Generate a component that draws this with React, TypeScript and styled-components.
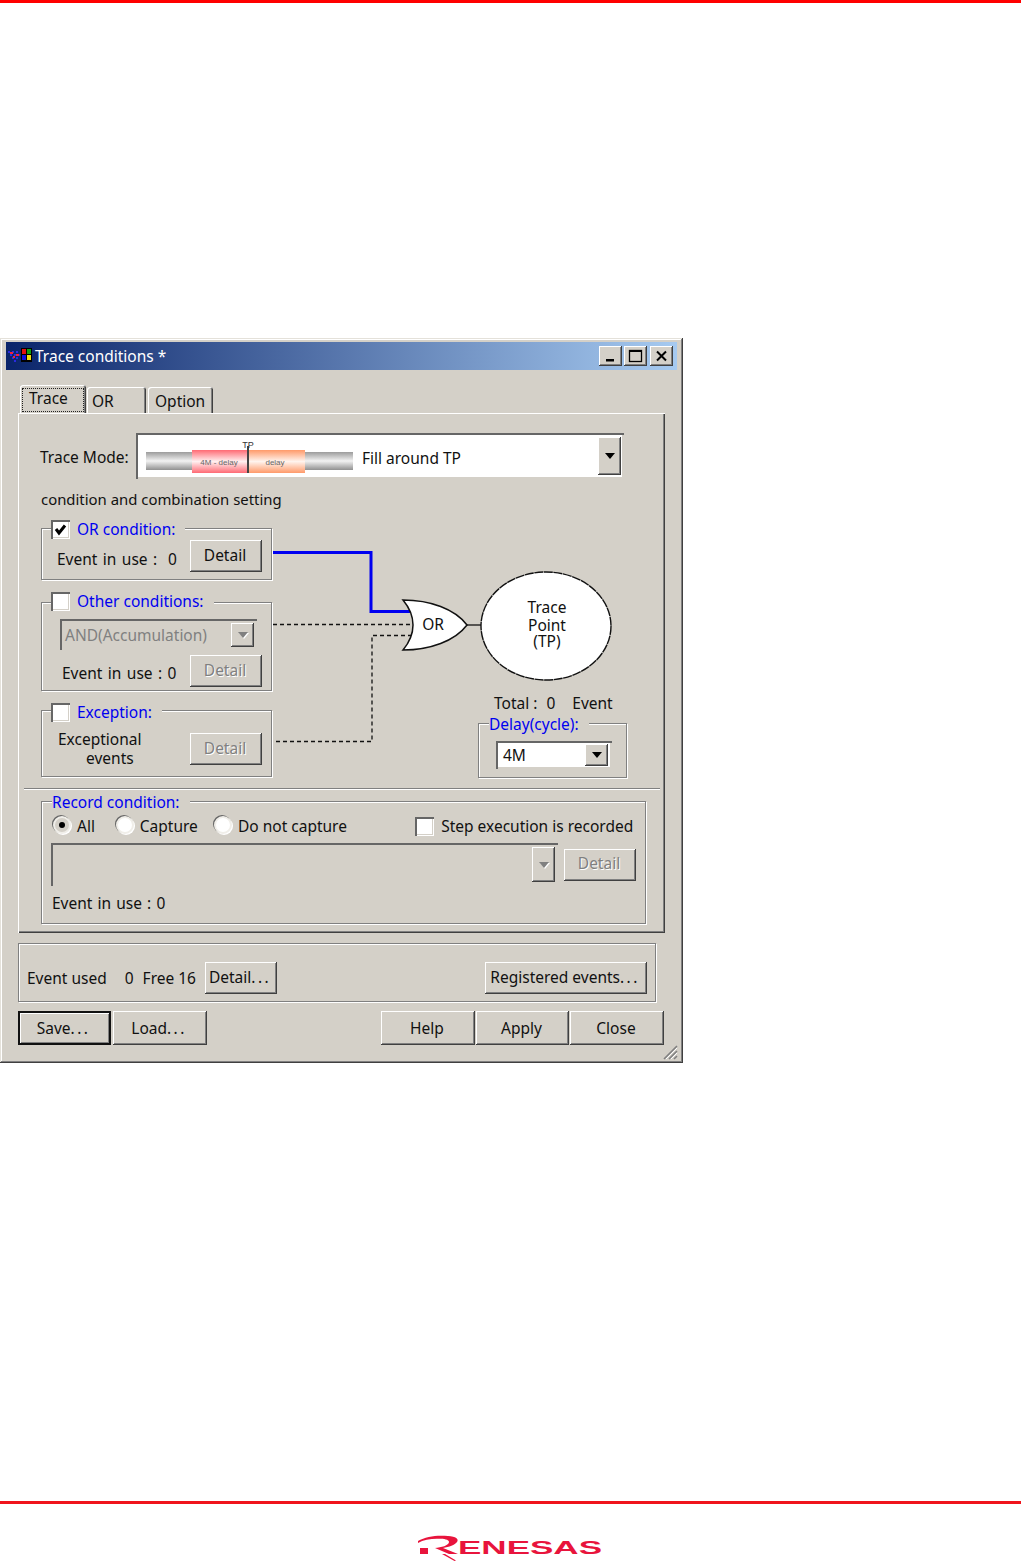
import React from 'react';
import styled, { createGlobalStyle } from 'styled-components';

const FACE = '#d4d0c8';

const GlobalStyle = createGlobalStyle`
  html, body {
    margin: 0;
    padding: 0;
    background: #fff;
  }
  body {
    font-family: 'Noto Sans', 'Open Sans', sans-serif;
    font-size: 15.5px;
    line-height: 20px;
    color: #111;
  }
  * {
    box-sizing: border-box;
  }
`;

const Page = styled.div`
  width: 1021px;
  height: 1562px;
  display: flex;
  flex-direction: column;
  overflow: hidden;
`;

const TopRule = styled.div`
  height: 3px;
  background: #f00;
`;

const Window = styled.div`
  position: relative;
  margin-top: 335px;
  width: 683px;
  height: 725px;
  padding: 4px 6px;
  background: ${FACE};
  box-shadow: inset -1px -1px 0 #404040, inset 1px 1px 0 #e4e1da,
    inset -2px -2px 0 #808080, inset 2px 2px 0 #fff;
`;

const TitleBar = styled.div`
  height: 28px;
  display: flex;
  align-items: center;
  padding: 0 4px 0 2px;
  background: linear-gradient(90deg, #0a246a, #a6caf0);
  color: #fff;
  font-size: 15.5px;
`;

const TitleText = styled.span`
  margin-left: 1px;
  flex: 1;
`;

const CaptionButton = styled.div<{ $ml?: number }>`
  width: 23px;
  height: 20px;
  margin-left: ${({ $ml }) => $ml ?? 2}px;
  background: ${FACE};
  box-shadow: inset -1px -1px 0 #404040, inset 1px 1px 0 #fff, inset -2px -2px 0 #808080;
  display: flex;
  align-items: center;
  justify-content: center;
`;

const Body = styled.div`
  padding: 15px 12px 0;
`;

const TabRow = styled.div`
  display: flex;
  align-items: flex-end;
  height: 28px;
  padding-left: 2px;
`;

const Tab = styled.div<{ $w: number; $pl?: number; $active?: boolean }>`
  width: ${({ $w }) => $w}px;
  height: ${({ $active }) => ($active ? 28 : 26)}px;
  margin-right: ${({ $active }) => ($active ? 1 : 2)}px;
  padding: ${({ $active, $pl }) => ($active ? '3px 2px 1px' : `4px 0 0 ${$pl ?? 5}px`)};
  background: ${FACE};
  border-radius: 3px 3px 0 0;
  box-shadow: inset 1px 1px 0 #fff, inset -1px 0 0 #404040, inset -2px 0 0 #808080;
`;

const FocusBox = styled.div`
  height: 100%;
  padding-left: 7px;
  outline: 1px dotted #222;
  outline-offset: -1px;
`;

const TabPanel = styled.div`
  height: 520px;
  background: ${FACE};
  box-shadow: inset 1px 1px 0 #fff, inset -1px -1px 0 #404040, inset -2px -2px 0 #808080;
`;

const TopSection = styled.div`
  padding: 20px 0 0 22px;
`;

const ModeRow = styled.div`
  display: flex;
  align-items: center;
`;

const ModeLabel = styled.span`
  width: 96px;
  margin-top: 2px;
`;

const Sunken = styled.div<{ $disabled?: boolean }>`
  display: flex;
  align-items: center;
  background: ${({ $disabled }) => ($disabled ? FACE : '#fff')};
  box-shadow: inset 2px 2px 0 #666, inset -2px -2px 0 ${FACE}, inset -1px -1px 0 #fff;
`;

const ModeCombo = styled(Sunken)`
  width: 488px;
  height: 46px;
  padding: 0 3px 0 10px;
`;

const ModeSvg = styled.svg`
  margin-top: 1px;
`;

const ModeText = styled.span`
  margin: 4px 0 0 9px;
  flex: 1;
`;

const DropButton = styled.div<{ $h: number; $w?: number; $disabled?: boolean }>`
  width: ${({ $w }) => $w ?? 23}px;
  height: ${({ $h }) => $h}px;
  flex: none;
  display: flex;
  align-items: center;
  justify-content: center;
  background: ${FACE};
  box-shadow: inset -1px -1px 0 #404040, inset 1px 1px 0 #fff, inset -2px -2px 0 #808080;
  &::after {
    content: '';
    border-style: solid;
    border-width: 6px 5.5px 0;
    border-color: ${({ $disabled }) => ($disabled ? '#808080' : '#000')} transparent transparent;
    filter: ${({ $disabled }) => ($disabled ? 'drop-shadow(1px 1px 0 #fff)' : 'none')};
  }
`;

const Caption = styled.div`
  margin-top: 10px;
  margin-left: 1px;
  font-size: 14.9px;
`;

const Conditions = styled.div`
  position: relative;
  display: grid;
  grid-template-columns: 231px 1fr;
  margin: 19px 0 0 1px;
  height: 250px;
`;

const GroupColumn = styled.div`
  display: flex;
  flex-direction: column;
`;

const Group = styled.div<{ $h: number; $w?: number; $gap?: number }>`
  position: relative;
  width: ${({ $w }) => ($w ? `${$w}px` : 'auto')};
  height: ${({ $h }) => $h}px;
  margin-bottom: ${({ $gap }) => $gap ?? 0}px;
  border: 1px solid #808080;
  box-shadow: 1px 1px 0 #fff, inset 1px 1px 0 #fff;
`;

const Legend = styled.div<{ $left: number; $top?: number }>`
  position: absolute;
  top: ${({ $top }) => $top ?? -10}px;
  left: ${({ $left }) => $left}px;
  display: flex;
  align-items: center;
  height: 20px;
  padding: 0 10px 0 0;
  background: ${FACE};
  color: #0000f0;
  white-space: nowrap;
`;

const Check = styled.div`
  width: 19px;
  height: 19px;
  margin-right: 7px;
  flex: none;
  background: #fff;
  box-shadow: inset 2px 2px 0 #666, inset -1px -1px 0 #fff, inset -2px -2px 0 ${FACE};
  display: flex;
  align-items: center;
  justify-content: center;
`;

const Button = styled.div<{ $w: number; $h?: number; $disabled?: boolean; $default?: boolean }>`
  width: ${({ $w }) => $w}px;
  height: ${({ $h }) => $h ?? 32}px;
  flex: none;
  display: flex;
  align-items: center;
  justify-content: center;
  padding: 0 2px ${({ $h }) => ($h ? 1 : 3)}px 0;
  background: ${FACE};
  color: ${({ $disabled }) => ($disabled ? '#808080' : '#111')};
  text-shadow: ${({ $disabled }) => ($disabled ? '1px 1px 0 #fff' : 'none')};
  box-shadow: ${({ $default }) =>
    $default
      ? 'inset 0 0 0 2px #111, inset 3px 3px 0 #fff, inset -3px -3px 0 #808080'
      : 'inset -1px -1px 0 #404040, inset 1px 1px 0 #fff, inset -2px -2px 0 #808080'};
`;

const Dots = styled.span`
  letter-spacing: 2.4px;
`;

const GroupRow = styled.div<{ $pad: string }>`
  display: flex;
  align-items: center;
  justify-content: space-between;
  padding: ${({ $pad }) => $pad};
`;

const UseText = styled.span<{ $mt?: number }>`
  margin-top: ${({ $mt }) => $mt ?? 5}px;
  word-spacing: 1.4px;
`;

const OtherSelect = styled(Sunken)`
  width: 197px;
  height: 31px;
  margin: 16px 0 0 18px;
  padding: 0 3px 0 5px;
  color: #808080;
  justify-content: space-between;
`;

const ExceptionText = styled.div`
  width: 84px;
  line-height: 19px;
`;

const IndentedLine = styled.div`
  padding-left: 28px;
`;

const SideColumn = styled.div`
  display: flex;
  flex-direction: column;
  justify-content: flex-end;
  padding: 0 0 0 206px;
`;

const TotalRow = styled.div`
  display: flex;
  padding-left: 16px;
  margin-bottom: 10px;
`;

const TotalPart = styled.span<{ $ml?: number }>`
  margin-left: ${({ $ml }) => $ml ?? 0}px;
`;

const DelaySelect = styled(Sunken)`
  width: 116px;
  height: 28px;
  margin: 17px 0 0 17px;
  padding: 0 4px 0 7px;
  justify-content: space-between;
`;

const Wires = styled.svg`
  position: absolute;
  left: 0;
  top: 0;
  pointer-events: none;
  overflow: visible;
  font-family: 'Noto Sans', 'Open Sans', sans-serif;
  font-size: 15.5px;
  fill: #111;
`;

const Separator = styled.div`
  height: 2px;
  margin: 10px 5px 0 6px;
  background: #808080;
  border-bottom: 1px solid #fff;
`;

const RecordSection = styled.div`
  padding: 11px 0 0 23px;
`;

const RecordGroup = styled.div`
  position: relative;
  width: 605px;
  height: 123px;
  padding: 13px 9px 0 9px;
  border: 1px solid #808080;
  box-shadow: 1px 1px 0 #fff, inset 1px 1px 0 #fff;
`;

const RadioRow = styled.div`
  display: flex;
  align-items: center;
  height: 22px;
  margin-left: 1px;
`;

const RadioItem = styled.div<{ $w: number }>`
  width: ${({ $w }) => $w}px;
  display: flex;
  align-items: center;
`;

const Radio = styled.div<{ $checked?: boolean }>`
  width: 18px;
  height: 18px;
  margin: -3px 6px 0 1px;
  flex: none;
  border-radius: 50%;
  background: ${({ $checked }) => ($checked ? FACE : '#fff')};
  border: 2px solid #f0eee9;
  box-shadow: -1px -1px 0 #666, 1px 1px 0 #fff;
  display: flex;
  align-items: center;
  justify-content: center;
  &::after {
    content: '';
    display: ${({ $checked }) => ($checked ? 'block' : 'none')};
    width: 6px;
    height: 6px;
    border-radius: 50%;
    background: #000;
  }
`;

const RecordCombo = styled(Sunken)`
  width: 507px;
  height: 43px;
  padding-right: 3px;
  justify-content: flex-end;
`;

const RecordComboRow = styled.div`
  display: flex;
  align-items: center;
  gap: 6px;
  margin-top: 6px;
`;

const EventNote = styled.div`
  margin: 7px 0 0 1px;
  word-spacing: 1.1px;
`;

const EventGroup = styled.div`
  display: flex;
  align-items: center;
  justify-content: space-between;
  width: 638px;
  height: 59px;
  margin-top: 10px;
  padding: 11px 8px 0 8px;
  border: 1px solid #808080;
  box-shadow: 1px 1px 0 #fff, inset 1px 1px 0 #fff;
`;

const EventStats = styled.div`
  display: flex;
  align-items: center;
`;

const StatText = styled.span<{ $ml?: number; $mr?: number }>`
  margin-left: ${({ $ml }) => $ml ?? 0}px;
  margin-right: ${({ $mr }) => $mr ?? 0}px;
`;

const ActionRow = styled.div`
  display: flex;
  justify-content: space-between;
  width: 646px;
  margin-top: 9px;
`;

const ActionGroup = styled.div<{ $gap: number }>`
  display: flex;
  gap: ${({ $gap }) => $gap}px;
`;

const Grip = styled.svg`
  position: absolute;
  right: 5px;
  bottom: 3px;
`;

const Spacer = styled.div`
  flex: 1;
`;

const BottomRule = styled.div`
  height: 3px;
  background: #f0141c;
`;

const LogoRow = styled.div`
  height: 58px;
  padding-top: 31px;
  display: flex;
  justify-content: center;
`;

const AppIcon = () => (
  <svg width="26" height="18" viewBox="0 0 26 18">
    <g fill="#2a2ae0">
      <rect x="0" y="4" width="2" height="2" />
      <rect x="4" y="4" width="2" height="2" />
      <rect x="8" y="4" width="2" height="2" />
      <rect x="2" y="7" width="2" height="2" />
      <rect x="6" y="7" width="2" height="2" />
      <rect x="10" y="7" width="2" height="2" />
      <rect x="4" y="10" width="2" height="2" />
      <rect x="8" y="10" width="2" height="2" />
      <rect x="6" y="13" width="2" height="2" />
    </g>
    <g fill="#f0203c">
      <rect x="2" y="5" width="3" height="2" />
      <rect x="8" y="7" width="3" height="2" />
      <rect x="5" y="9" width="2" height="2" />
    </g>
    <rect x="13" y="1" width="11" height="14" fill="#000" />
    <rect x="14" y="2" width="4" height="5" fill="#e01010" />
    <rect x="19" y="2" width="4" height="5" fill="#10a010" />
    <rect x="14" y="8" width="4" height="5" fill="#1010e0" />
    <rect x="19" y="8" width="4" height="5" fill="#f0e010" />
  </svg>
);

const MinIcon = () => (
  <svg width="13" height="12" viewBox="0 0 13 12">
    <rect x="2" y="9" width="8" height="2.5" fill="#000" />
  </svg>
);

const MaxIcon = () => (
  <svg width="15" height="14" viewBox="0 0 15 14">
    <rect x="1.5" y="1.5" width="12" height="11" fill="none" stroke="#000" strokeWidth="1.3" />
    <rect x="1" y="1" width="13" height="2" fill="#000" />
  </svg>
);

const CloseIcon = () => (
  <svg width="13" height="12" viewBox="0 0 13 12">
    <path d="M2 1.5 L11 10.5 M11 1.5 L2 10.5" stroke="#000" strokeWidth="2" />
  </svg>
);

const CheckMark = () => (
  <svg width="13" height="13" viewBox="0 0 13 13">
    <path d="M2 6 L5 10 L11 2.5" fill="none" stroke="#000" strokeWidth="3" />
  </svg>
);

const ModePicture = () => (
  <ModeSvg width="207" height="34" viewBox="0 0 207 34">
    <defs>
      <linearGradient id="barGrey" x1="0" y1="0" x2="0" y2="1">
        <stop offset="0" stopColor="#9c9c9c" />
        <stop offset="0.5" stopColor="#f2f2f2" />
        <stop offset="1" stopColor="#909090" />
      </linearGradient>
      <linearGradient id="barRed" x1="0" y1="0" x2="0" y2="1">
        <stop offset="0" stopColor="#ff6a74" />
        <stop offset="0.5" stopColor="#fff0f0" />
        <stop offset="1" stopColor="#ff6a74" />
      </linearGradient>
      <linearGradient id="barOrange" x1="0" y1="0" x2="0" y2="1">
        <stop offset="0" stopColor="#ff9a6a" />
        <stop offset="0.5" stopColor="#fff4ee" />
        <stop offset="1" stopColor="#ff9a6a" />
      </linearGradient>
    </defs>
    <rect x="0" y="12" width="207" height="18" fill="url(#barGrey)" />
    <rect x="46" y="10" width="55" height="23" fill="url(#barRed)" />
    <rect x="103" y="10" width="56" height="23" fill="url(#barOrange)" />
    <rect x="101" y="6" width="2" height="27" fill="#444" />
    <text x="102" y="8" fontSize="9" textAnchor="middle" fill="#333" fontFamily="'Liberation Sans', sans-serif">TP</text>
    <text x="73" y="25" fontSize="8" textAnchor="middle" fill="#666" fontFamily="'Liberation Sans', sans-serif">4M - delay</text>
    <text x="129" y="25" fontSize="8" textAnchor="middle" fill="#666" fontFamily="'Liberation Sans', sans-serif">delay</text>
  </ModeSvg>
);

const ConditionWires = () => (
  <Wires width="590" height="250" viewBox="41 528 590 250">
    <path d="M273 552.5 H371 V611.5 H411" fill="none" stroke="#0000f0" strokeWidth="3" />
    <path d="M273 624.5 H413 M412 635.5 H372 V741.5 H273" fill="none" stroke="#111" strokeWidth="1.3" strokeDasharray="4 3" />
    <path
      d="M403 600 Q413 612 413 625 Q413 638 403 650 C430 650 455 641 467 625 C455 609 430 600 403 600 Z"
      fill="#fff"
      stroke="#111"
      strokeWidth="1.5"
    />
    <path d="M467 625 H481" stroke="#111" strokeWidth="1.3" />
    <ellipse cx="546" cy="626" rx="65" ry="54" fill="#fff" stroke="#111" strokeWidth="1.4" strokeDasharray="9 0.6" />
    <text x="433" y="630" textAnchor="middle">OR</text>
    <text x="547" y="613" textAnchor="middle">Trace</text>
    <text x="547" y="631" textAnchor="middle">Point</text>
    <text x="547" y="647" textAnchor="middle">(TP)</text>
  </Wires>
);

const GripIcon = () => (
  <Grip width="17" height="17" viewBox="0 0 17 17">
    <path d="M16 3 L3 16 M16 8 L8 16 M16 13 L13 16" stroke="#808080" strokeWidth="1.6" fill="none" />
    <path d="M16 5 L5 16 M16 10 L10 16" stroke="#fff" strokeWidth="1" fill="none" />
  </Grip>
);

const Logo = () => (
  <svg width="186" height="27" viewBox="0 0 186 27">
    <path
      d="M0 6 C8 1 20 0 30 1 C38 1.5 41 4 39 7 C37 10 31 12 25 13 L40 19 L31 19 L17 13 C23 12.5 31 10.5 31 7 C31 4 24 3.6 19 3.8 C12 4 5 5 0 8 Z"
      fill="#e8143c"
    />
    <path d="M27 19 L38 25.5 L36.5 26 L24 19 Z" fill="#e8143c" />
    <rect x="2" y="13" width="8" height="6" fill="#e8143c" />
    <text
      x="40"
      y="19"
      fontFamily="'Liberation Sans', sans-serif"
      fontWeight="700"
      fontSize="18"
      fill="#e8143c"
      textLength="144"
      lengthAdjust="spacingAndGlyphs"
    >
      ENESAS
    </text>
  </svg>
);

export default function App() {
  return (
    <Page>
      <GlobalStyle />
      <TopRule />
      <Window>
        <TitleBar>
          <AppIcon />
          <TitleText>Trace conditions *</TitleText>
          <CaptionButton>
            <MinIcon />
          </CaptionButton>
          <CaptionButton>
            <MaxIcon />
          </CaptionButton>
          <CaptionButton $ml={3}>
            <CloseIcon />
          </CaptionButton>
        </TitleBar>
        <Body>
          <TabRow>
            <Tab $w={66} $active>
              <FocusBox>Trace</FocusBox>
            </Tab>
            <Tab $w={59}>OR</Tab>
            <Tab $w={65} $pl={7}>
              Option
            </Tab>
          </TabRow>
          <TabPanel>
            <TopSection>
              <ModeRow>
                <ModeLabel>Trace Mode:</ModeLabel>
                <ModeCombo>
                  <ModePicture />
                  <ModeText>Fill around TP</ModeText>
                  <DropButton $h={38} />
                </ModeCombo>
              </ModeRow>
              <Caption>condition and combination setting</Caption>
              <Conditions>
                <GroupColumn>
                  <Group $h={52} $gap={22}>
                    <Legend $left={9}>
                      <Check>
                        <CheckMark />
                      </Check>
                      OR condition:
                    </Legend>
                    <GroupRow $pad="11px 9px 0 15px">
                      <UseText>Event in use :&nbsp; 0</UseText>
                      <Button $w={72}>Detail</Button>
                    </GroupRow>
                  </Group>
                  <Group $h={89} $gap={19}>
                    <Legend $left={9} $top={-12}>
                      <Check />
                      Other conditions:
                    </Legend>
                    <OtherSelect $disabled>
                      AND(Accumulation)
                      <DropButton $h={24} $w={23} $disabled />
                    </OtherSelect>
                    <GroupRow $pad="5px 9px 0 20px">
                      <UseText $mt={3}>Event in use : 0</UseText>
                      <Button $w={72} $disabled>
                        Detail
                      </Button>
                    </GroupRow>
                  </Group>
                  <Group $h={67}>
                    <Legend $left={9} $top={-9}>
                      <Check />
                      Exception:
                    </Legend>
                    <GroupRow $pad="19px 9px 0 16px">
                      <ExceptionText>
                        Exceptional
                        <IndentedLine>events</IndentedLine>
                      </ExceptionText>
                      <Button $w={72} $disabled>
                        Detail
                      </Button>
                    </GroupRow>
                  </Group>
                </GroupColumn>
                <SideColumn>
                  <TotalRow>
                    <TotalPart>Total :</TotalPart>
                    <TotalPart $ml={9}>0</TotalPart>
                    <TotalPart $ml={17}>Event</TotalPart>
                  </TotalRow>
                  <Group $h={55} $w={149}>
                    <Legend $left={10}>Delay(cycle):</Legend>
                    <DelaySelect>
                      4M
                      <DropButton $h={22} />
                    </DelaySelect>
                  </Group>
                </SideColumn>
                <ConditionWires />
              </Conditions>
            </TopSection>
            <Separator />
            <RecordSection>
              <RecordGroup>
                <Legend $left={10}>Record condition:</Legend>
                <RadioRow>
                  <RadioItem $w={64}>
                    <Radio $checked />
                    All
                  </RadioItem>
                  <RadioItem $w={100}>
                    <Radio />
                    Capture
                  </RadioItem>
                  <RadioItem $w={206}>
                    <Radio />
                    Do not capture
                  </RadioItem>
                  <RadioItem $w={225}>
                    <Check />
                    Step execution is recorded
                  </RadioItem>
                </RadioRow>
                <RecordComboRow>
                  <RecordCombo $disabled>
                    <DropButton $h={35} $disabled />
                  </RecordCombo>
                  <Button $w={72} $disabled>
                    Detail
                  </Button>
                </RecordComboRow>
                <EventNote>Event in use : 0</EventNote>
              </RecordGroup>
            </RecordSection>
          </TabPanel>
          <EventGroup>
            <EventStats>
              <StatText>Event used</StatText>
              <StatText $ml={18}>0</StatText>
              <StatText $ml={9} $mr={9}>
                Free 16
              </StatText>
              <Button $w={72}>
                <span>
                  Detail<Dots>...</Dots>
                </span>
              </Button>
            </EventStats>
            <Button $w={162}>
              <span>
                Registered events<Dots>...</Dots>
              </span>
            </Button>
          </EventGroup>
          <ActionRow>
            <ActionGroup $gap={2}>
              <Button $w={93} $h={34} $default>
                <span>
                  Save<Dots>...</Dots>
                </span>
              </Button>
              <Button $w={94} $h={34}>
                <span>
                  Load<Dots>...</Dots>
                </span>
              </Button>
            </ActionGroup>
            <ActionGroup $gap={1}>
              <Button $w={94} $h={34}>
                Help
              </Button>
              <Button $w={93} $h={34}>
                Apply
              </Button>
              <Button $w={94} $h={34}>
                Close
              </Button>
            </ActionGroup>
          </ActionRow>
        </Body>
        <GripIcon />
      </Window>
      <Spacer />
      <BottomRule />
      <LogoRow>
        <Logo />
      </LogoRow>
    </Page>
  );
}
